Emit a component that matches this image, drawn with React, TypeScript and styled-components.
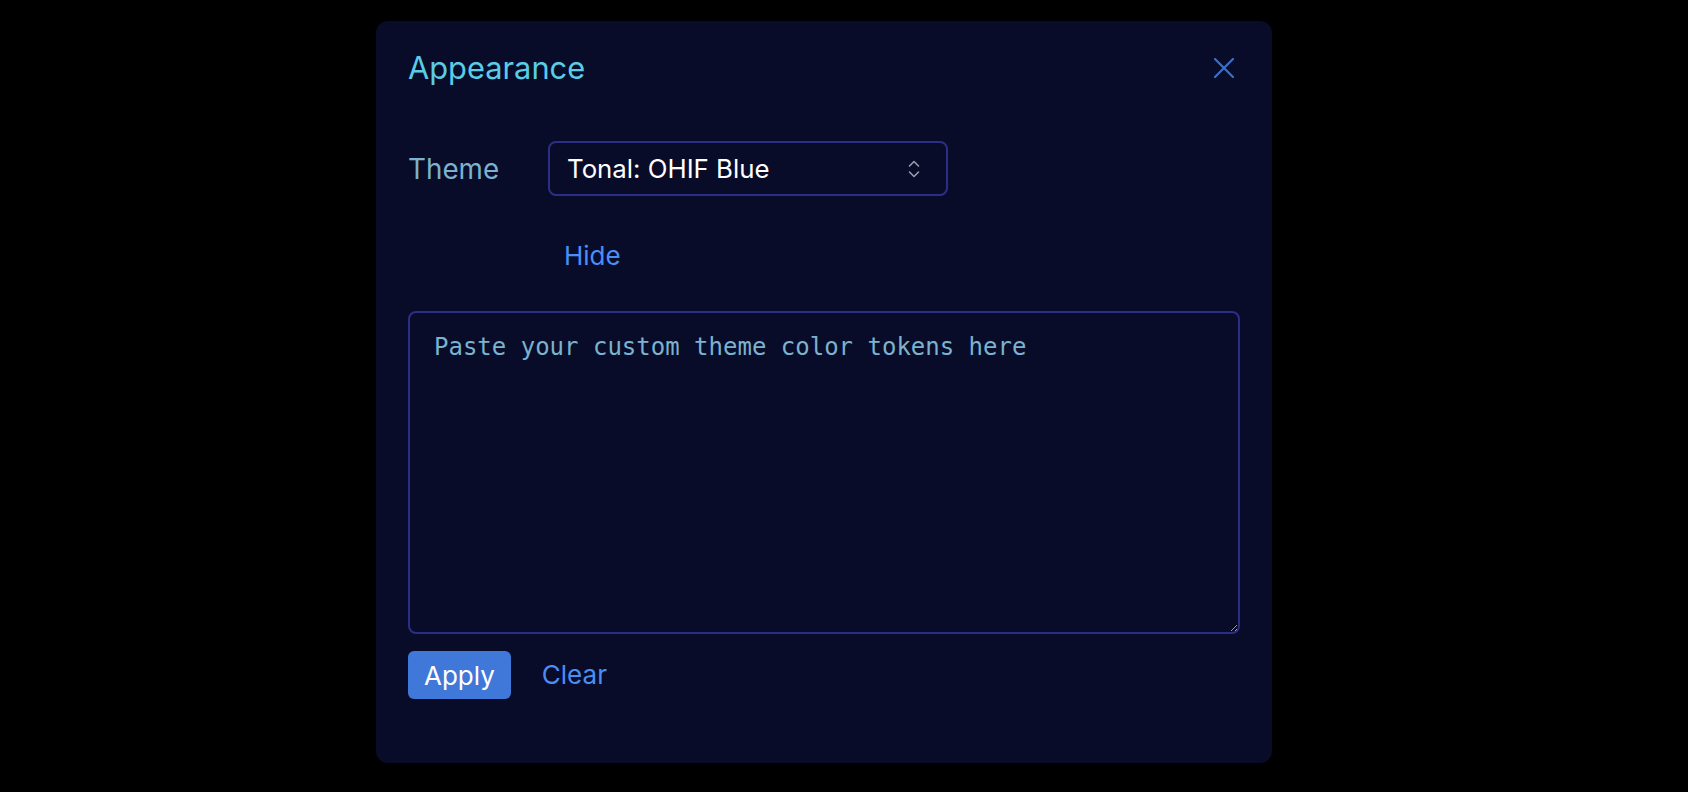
import React from "react";
import styled, { createGlobalStyle } from "styled-components";

const GlobalStyle = createGlobalStyle`
  html, body {
    margin: 0;
    padding: 0;
    background: #000000;
  }
  body {
    font-family: Inter, "Noto Sans", "Liberation Sans", sans-serif;
    -webkit-font-smoothing: antialiased;
  }
  * {
    box-sizing: border-box;
  }
`;

const Page = styled.div`
  display: flex;
  justify-content: center;
  align-items: flex-start;
  min-height: 792px;
  padding: 21px 40px 0 0;
`;

const Dialog = styled.section`
  width: 896px;
  height: 742px;
  background: #090c29;
  border-radius: 12px;
  padding: 23px 32px 64px 32px;
  display: flex;
  flex-direction: column;
`;

const Header = styled.header`
  height: 48px;
  display: flex;
  align-items: center;
  justify-content: space-between;
`;

const Title = styled.h2`
  margin: 0 0 2px;
  font-size: 30.8px;
  font-weight: 400;
  color: #5acce6;
  letter-spacing: 0;
`;

const CloseButton = styled.button`
  width: 32px;
  height: 32px;
  display: flex;
  align-items: center;
  justify-content: center;
  background: transparent;
  border: 0;
  padding: 0;
  cursor: pointer;
  color: #3a6fcc;
`;

const FieldRow = styled.div`
  margin-top: 49px;
  display: flex;
  align-items: center;
`;

const FieldLabel = styled.label`
  width: 140px;
  font-size: 27.8px;
  color: #7bb2ce;
`;

const SelectBox = styled.div`
  position: relative;
  width: 400px;
  height: 55px;
  border: 2px solid #2b2e86;
  border-radius: 8px;
  display: flex;
  align-items: center;
  padding: 0 17px;
  font-size: 25.8px;
  color: #ffffff;
`;

const SelectValue = styled.span`
  flex: 1;
`;

const Chevrons = styled.span`
  display: flex;
  margin-right: 9px;
  color: #9a9bad;
`;

const LinkButton = styled.button`
  background: transparent;
  border: 0;
  padding: 8px 16px;
  font-family: inherit;
  font-size: 26px;
  line-height: 28px;
  color: #4a8ef6;
  cursor: pointer;
`;

const HideRow = styled.div`
  margin-top: 37.5px;
  padding-left: 140px;
  display: flex;
  height: 44px;
  align-items: center;
`;

const TokenInput = styled.textarea`
  margin-top: 33.5px;
  width: 100%;
  height: 323px;
  background: #090c29;
  border: 2px solid #2b2e86;
  border-radius: 8px;
  padding: 20px 24px;
  font-family: "DejaVu Sans Mono", "Liberation Mono", monospace;
  font-size: 24px;
  color: #ffffff;
  outline: none;
  resize: vertical;

  &::placeholder {
    color: #7bb2ce;
    opacity: 1;
  }
`;

const Actions = styled.div`
  margin-top: 17px;
  display: flex;
  align-items: center;
`;

const PrimaryButton = styled.button`
  height: 48px;
  padding: 0 16px;
  background: #3f78d8;
  border: 0;
  border-radius: 6px;
  font-family: inherit;
  font-size: 26px;
  color: #ffffff;
  cursor: pointer;
`;

const ActionLink = styled(LinkButton)`
  margin-left: 15px;
`;

function CloseIcon() {
  return (
    <svg width="20" height="20" viewBox="0 0 20 20" fill="none">
      <path
        d="M1 1 L19 19 M19 1 L1 19"
        stroke="currentColor"
        strokeWidth="2.2"
        strokeLinecap="round"
      />
    </svg>
  );
}

function UpDownIcon() {
  return (
    <svg width="12" height="18" viewBox="0 0 12 18" fill="none">
      <path
        d="M1.5 6 L6 1.5 L10.5 6 M1.5 12 L6 16.5 L10.5 12"
        stroke="currentColor"
        strokeWidth="1.6"
        strokeLinecap="round"
        strokeLinejoin="round"
      />
    </svg>
  );
}

export default function App() {
  return (
    <>
      <GlobalStyle />
      <Page>
        <Dialog>
          <Header>
            <Title>Appearance</Title>
            <CloseButton aria-label="Close">
              <CloseIcon />
            </CloseButton>
          </Header>

          <FieldRow>
            <FieldLabel>Theme</FieldLabel>
            <SelectBox>
              <SelectValue>Tonal: OHIF Blue</SelectValue>
              <Chevrons>
                <UpDownIcon />
              </Chevrons>
            </SelectBox>
          </FieldRow>

          <HideRow>
            <LinkButton>Hide</LinkButton>
          </HideRow>

          <TokenInput placeholder="Paste your custom theme color tokens here" />

          <Actions>
            <PrimaryButton>Apply</PrimaryButton>
            <ActionLink>Clear</ActionLink>
          </Actions>
        </Dialog>
      </Page>
    </>
  );
}
